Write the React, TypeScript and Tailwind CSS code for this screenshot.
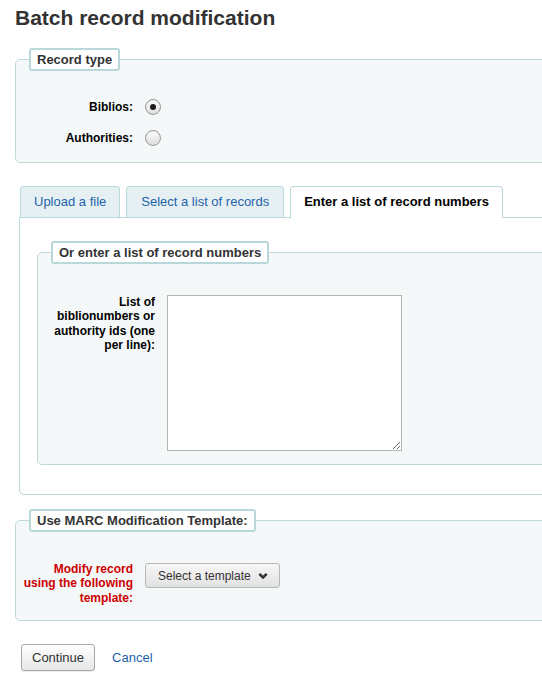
import React from "react";

const Radio = ({ checked }: { checked?: boolean }) => (
  <span className="flex h-[16px] w-[16px] items-center justify-center rounded-full border border-[#999] bg-linear-to-b from-white to-[#dcdcdc] shadow-[inset_0_1px_1px_rgba(0,0,0,0.08)]">
    {checked && <span className="h-[6px] w-[6px] rounded-full bg-[#1c1c1c]" />}
  </span>
);

const Legend = ({ children }: { children: React.ReactNode }) => (
  <legend className="ml-[13px] rounded-[3px] border-2 border-[#b9d8d9] bg-white px-[6px] py-[2px] text-[13px] leading-[15px] font-bold text-[#333]">
    {children}
  </legend>
);

const App = () => {
  return (
    <div className="min-h-[674px] w-[542px] overflow-hidden bg-white font-['Liberation_Sans',Arial,sans-serif] text-[12px] text-black">
      <div className="w-[620px] pl-[15px]">
        <h1 className="pt-[6px] text-[21px] leading-[24px] font-bold text-[#333]">
          Batch record modification
        </h1>

        <fieldset className="mt-[18px] w-[580px] rounded-[5px] border border-[#c0dadc] bg-[#f4f8f9] pt-[28px] pb-[16px]">
          <Legend>Record type</Legend>
          <div className="flex flex-col gap-[15px]">
            <div className="flex h-[16px] items-center">
              <label className="ml-[5px] w-[112px] text-right font-bold">Biblios:</label>
              <span className="ml-[12px]">
                <Radio checked />
              </span>
            </div>
            <div className="flex h-[16px] items-center">
              <label className="ml-[5px] w-[112px] text-right font-bold">Authorities:</label>
              <span className="ml-[12px]">
                <Radio />
              </span>
            </div>
          </div>
        </fieldset>

        <div className="mt-[23px] ml-[5px] flex items-end gap-[6px] text-[13px]">
          <a className="h-[31px] rounded-t-[4px] border border-b-0 border-[#b9d8d9] bg-[#e6f0f2] px-[13px] leading-[30px] text-[#1f63ab]">
            Upload a file
          </a>
          <a className="h-[31px] rounded-t-[4px] border border-b-0 border-[#b9d8d9] bg-[#e6f0f2] px-[14px] leading-[30px] text-[#1f63ab]">
            Select a list of records
          </a>
          <a className="relative z-10 -mb-px h-[32px] rounded-t-[4px] border border-b-0 border-[#b9d8d9] bg-white px-[13px] leading-[30px] font-bold text-black">
            Enter a list of record numbers
          </a>
        </div>
        <div className="ml-[4px] w-[580px] rounded-b-[5px] border border-[#b9d8d9] bg-white pt-[23px] pb-[29px] pl-[17px]">
          <fieldset className="w-[560px] rounded-[5px] border border-[#c0dadc] bg-[#f4f8f9] pt-[31px] pb-[13px]">
            <Legend>Or enter a list of record numbers</Legend>
            <div className="flex items-start">
              <label className="ml-[5px] w-[112px] text-right leading-[14.4px] font-bold">
                List of biblionumbers or authority ids (one per line):
              </label>
              <textarea className="ml-[12px] h-[156px] w-[235px] resize border border-[#b5b5b5] bg-white" />
            </div>
          </fieldset>
        </div>

        <fieldset className="mt-[14px] w-[580px] rounded-[5px] border border-[#c0dadc] bg-[#f4f8f9] pt-[30px] pb-[15px]">
          <Legend>Use MARC Modification Template:</Legend>
          <div className="flex items-start">
            <label className="ml-[5px] w-[112px] text-right leading-[14.4px] font-bold text-[#cc0000]">
              Modify record using the following template:
            </label>
            <button className="mt-[1px] ml-[12px] flex h-[25px] items-center rounded-[3px] border border-[#b8b8b8] bg-linear-to-b from-[#f6f6f6] to-[#e2e2e2] pr-[11px] pl-[12px] text-[12px] text-[#333]">
              Select a template
              <svg className="ml-[7px]" width="10" height="8" viewBox="0 0 10 8">
                <polyline points="1.3,1.8 5,5.5 8.7,1.8" fill="none" stroke="#333" strokeWidth="2.6" />
              </svg>
            </button>
          </div>
        </fieldset>

        <div className="mt-[23px] flex items-center">
          <button className="ml-[6px] h-[27px] rounded-[3px] border border-[#a8a8a8] bg-linear-to-b from-white to-[#e6e6e6] px-[10px] text-[13px] text-[#333] shadow-[0_1px_1px_rgba(0,0,0,0.08)]">
            Continue
          </button>
          <a className="ml-[17px] text-[13px] text-[#1f63ab]">Cancel</a>
        </div>
      </div>
    </div>
  );
};

export default App;
